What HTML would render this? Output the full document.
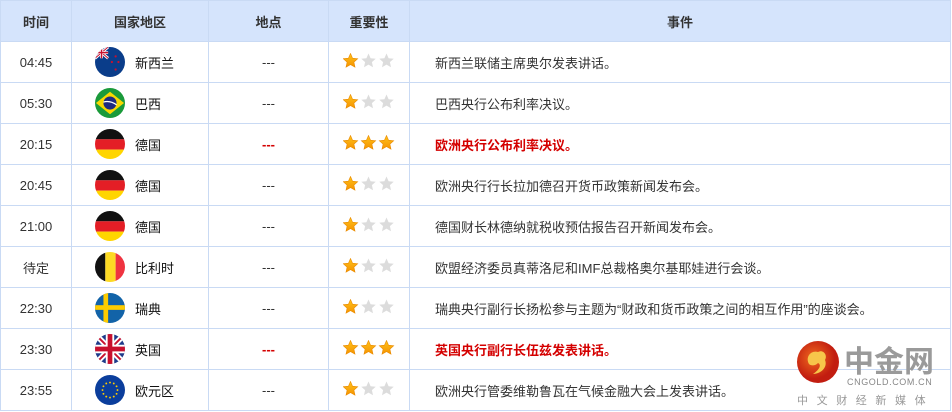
<!DOCTYPE html>
<html><head><meta charset="utf-8"><style>
*{margin:0;padding:0;box-sizing:border-box}
body{width:952px;height:412px;background:#fff;font-family:"Liberation Sans","Noto Sans CJK SC",sans-serif;font-size:13px;color:#333;position:relative;overflow:hidden}
table{position:absolute;left:0;top:0;border-collapse:collapse;table-layout:fixed;width:951px}
td,th{border:1px solid #c9daf4;height:41px;text-align:center;vertical-align:middle}
th{background:#d5e4fc;font-weight:bold;font-size:13px;color:#333}
td.ev{text-align:left;padding-left:25px}
.red{color:#d40000;font-weight:bold}
.cc{display:flex;align-items:center;padding-left:23px}
.cc svg{width:30px;height:30px;margin-right:10px;flex:none}
.cc b{font-weight:normal;color:#111}
.st{text-align:left;padding-left:14px}
.st svg{display:block;position:relative;top:-2px}
.logo{position:absolute;left:795px;top:337px}
</style></head><body>
<svg width="0" height="0" style="position:absolute"><defs><clipPath id="c"><circle cx="16" cy="16" r="16"/></clipPath>
<path id="s" d="M7.5 0.5L9.6 5.2L14.7 5.7L10.9 9.1L12 14.2L7.5 11.6L3 14.2L4.1 9.1L0.3 5.7L5.4 5.2Z"/>
<linearGradient id="yg" x1="0" y1="0" x2="0" y2="1"><stop offset="0" stop-color="#ffc21a"/><stop offset="1" stop-color="#f59300"/></linearGradient>
</defs></svg>
<table>
<colgroup><col style="width:71px"><col style="width:137px"><col style="width:120px"><col style="width:81px"><col></colgroup>
<tr><th>时间</th><th>国家地区</th><th>地点</th><th>重要性</th><th>事件</th></tr>
<tr><td>04:45</td><td><div class="cc"><svg viewBox="0 0 32 32"><g clip-path="url(#c)"><rect width="32" height="32" fill="#0a3d8a"/><path d="M0 0L14 12M14 0L0 12" stroke="#fff" stroke-width="3"/><path d="M0 0L14 12M14 0L0 12" stroke="#c8102e" stroke-width="1"/><path d="M7 0V12M0 6H14" stroke="#fff" stroke-width="3"/><path d="M7 0V12M0 6H14" stroke="#c8102e" stroke-width="1.5"/><circle cx="22" cy="10" r="1.2" fill="#c8102e"/><circle cx="25" cy="16" r="1.2" fill="#c8102e"/><circle cx="22" cy="24" r="1.2" fill="#c8102e"/><circle cx="18" cy="16" r="1.2" fill="#c8102e"/></g></svg><b>新西兰</b></div></td><td>---</td><td class="st"><svg width="52" height="15"><use href="#s" fill="url(#yg)" stroke="#e98a00" stroke-width=".6"/><use href="#s" x="18" fill="#dcdcdc"/><use href="#s" x="36" fill="#dcdcdc"/></svg></td><td class="ev">新西兰联储主席奥尔发表讲话。</td></tr>
<tr><td>05:30</td><td><div class="cc"><svg viewBox="0 0 32 32"><g clip-path="url(#c)"><rect width="32" height="32" fill="#1a9a3a"/><path d="M16 4L31 16L16 28L1 16Z" fill="#f8d800"/><circle cx="16" cy="16" r="7" fill="#1f2a80"/><path d="M9 15Q16 13 23 18" stroke="#fff" stroke-width="1.3" fill="none"/></g></svg><b>巴西</b></div></td><td>---</td><td class="st"><svg width="52" height="15"><use href="#s" fill="url(#yg)" stroke="#e98a00" stroke-width=".6"/><use href="#s" x="18" fill="#dcdcdc"/><use href="#s" x="36" fill="#dcdcdc"/></svg></td><td class="ev">巴西央行公布利率决议。</td></tr>
<tr><td>20:15</td><td><div class="cc"><svg viewBox="0 0 32 32"><g clip-path="url(#c)"><rect width="32" height="11" fill="#111"/><rect y="11" width="32" height="11" fill="#e41e26"/><rect y="22" width="32" height="10" fill="#ffd500"/></g></svg><b>德国</b></div></td><td class="red">---</td><td class="st"><svg width="52" height="15"><use href="#s" fill="url(#yg)" stroke="#e98a00" stroke-width=".6"/><use href="#s" x="18" fill="url(#yg)" stroke="#e98a00" stroke-width=".6"/><use href="#s" x="36" fill="url(#yg)" stroke="#e98a00" stroke-width=".6"/></svg></td><td class="ev red">欧洲央行公布利率决议。</td></tr>
<tr><td>20:45</td><td><div class="cc"><svg viewBox="0 0 32 32"><g clip-path="url(#c)"><rect width="32" height="11" fill="#111"/><rect y="11" width="32" height="11" fill="#e41e26"/><rect y="22" width="32" height="10" fill="#ffd500"/></g></svg><b>德国</b></div></td><td>---</td><td class="st"><svg width="52" height="15"><use href="#s" fill="url(#yg)" stroke="#e98a00" stroke-width=".6"/><use href="#s" x="18" fill="#dcdcdc"/><use href="#s" x="36" fill="#dcdcdc"/></svg></td><td class="ev">欧洲央行行长拉加德召开货币政策新闻发布会。</td></tr>
<tr><td>21:00</td><td><div class="cc"><svg viewBox="0 0 32 32"><g clip-path="url(#c)"><rect width="32" height="11" fill="#111"/><rect y="11" width="32" height="11" fill="#e41e26"/><rect y="22" width="32" height="10" fill="#ffd500"/></g></svg><b>德国</b></div></td><td>---</td><td class="st"><svg width="52" height="15"><use href="#s" fill="url(#yg)" stroke="#e98a00" stroke-width=".6"/><use href="#s" x="18" fill="#dcdcdc"/><use href="#s" x="36" fill="#dcdcdc"/></svg></td><td class="ev">德国财长林德纳就税收预估报告召开新闻发布会。</td></tr>
<tr><td>待定</td><td><div class="cc"><svg viewBox="0 0 32 32"><g clip-path="url(#c)"><rect width="11" height="32" fill="#111"/><rect x="11" width="11" height="32" fill="#fdda24"/><rect x="22" width="10" height="32" fill="#ef3340"/></g></svg><b>比利时</b></div></td><td>---</td><td class="st"><svg width="52" height="15"><use href="#s" fill="url(#yg)" stroke="#e98a00" stroke-width=".6"/><use href="#s" x="18" fill="#dcdcdc"/><use href="#s" x="36" fill="#dcdcdc"/></svg></td><td class="ev">欧盟经济委员真蒂洛尼和IMF总裁格奥尔基耶娃进行会谈。</td></tr>
<tr><td>22:30</td><td><div class="cc"><svg viewBox="0 0 32 32"><g clip-path="url(#c)"><rect width="32" height="32" fill="#1263a8"/><rect x="9" width="5" height="32" fill="#fecc00"/><rect y="13" width="32" height="5" fill="#fecc00"/></g></svg><b>瑞典</b></div></td><td>---</td><td class="st"><svg width="52" height="15"><use href="#s" fill="url(#yg)" stroke="#e98a00" stroke-width=".6"/><use href="#s" x="18" fill="#dcdcdc"/><use href="#s" x="36" fill="#dcdcdc"/></svg></td><td class="ev">瑞典央行副行长扬松参与主题为“财政和货币政策之间的相互作用”的座谈会。</td></tr>
<tr><td>23:30</td><td><div class="cc"><svg viewBox="0 0 32 32"><g clip-path="url(#c)"><rect width="32" height="32" fill="#1f3b8a"/><path d="M0 0L32 32M32 0L0 32" stroke="#fff" stroke-width="6"/><path d="M0 0L32 32M32 0L0 32" stroke="#c8102e" stroke-width="2"/><path d="M16 0V32M0 16H32" stroke="#fff" stroke-width="9"/><path d="M16 0V32M0 16H32" stroke="#c8102e" stroke-width="5"/></g></svg><b>英国</b></div></td><td class="red">---</td><td class="st"><svg width="52" height="15"><use href="#s" fill="url(#yg)" stroke="#e98a00" stroke-width=".6"/><use href="#s" x="18" fill="url(#yg)" stroke="#e98a00" stroke-width=".6"/><use href="#s" x="36" fill="url(#yg)" stroke="#e98a00" stroke-width=".6"/></svg></td><td class="ev red">英国央行副行长伍兹发表讲话。</td></tr>
<tr><td>23:55</td><td><div class="cc"><svg viewBox="0 0 32 32"><g clip-path="url(#c)"><rect width="32" height="32" fill="#0b3e9c"/><g fill="#fc0"><circle cx="16" cy="8" r="1"/><circle cx="20" cy="9" r="1"/><circle cx="23" cy="12" r="1"/><circle cx="24" cy="16" r="1"/><circle cx="23" cy="20" r="1"/><circle cx="20" cy="23" r="1"/><circle cx="16" cy="24" r="1"/><circle cx="12" cy="23" r="1"/><circle cx="9" cy="20" r="1"/><circle cx="8" cy="16" r="1"/><circle cx="9" cy="12" r="1"/><circle cx="12" cy="9" r="1"/></g></g></svg><b>欧元区</b></div></td><td>---</td><td class="st"><svg width="52" height="15"><use href="#s" fill="url(#yg)" stroke="#e98a00" stroke-width=".6"/><use href="#s" x="18" fill="#dcdcdc"/><use href="#s" x="36" fill="#dcdcdc"/></svg></td><td class="ev">欧洲央行管委维勒鲁瓦在气候金融大会上发表讲话。</td></tr>
</table>
<div class="logo">
<svg width="150" height="72" viewBox="0 0 150 72">
<defs><radialGradient id="r" cx="40%" cy="40%"><stop offset="0" stop-color="#f06a1e"/><stop offset="1" stop-color="#c21d10"/></radialGradient></defs>
<circle cx="23" cy="25" r="21" fill="url(#r)"/>
<path d="M14 27C10 20 16 13 23 15C28 12 33 18 30 23C33 30 26 37 18 37C24 33 27 28 23 26C20 29 16 29 14 27Z" fill="#f7c64a"/>
<text x="49" y="35" font-family="Noto Sans CJK SC,sans-serif" font-weight="bold" font-size="30" fill="#9a9a9a">中金网</text>
<text x="52" y="48" font-family="Liberation Sans,sans-serif" font-size="9" fill="#888" letter-spacing="0.6">CNGOLD.COM.CN</text>
<text x="2" y="67" font-family="Noto Sans CJK SC,sans-serif" font-size="11" fill="#999" letter-spacing="8.6">中文财经新媒体</text>
</svg></div>
</body></html>
